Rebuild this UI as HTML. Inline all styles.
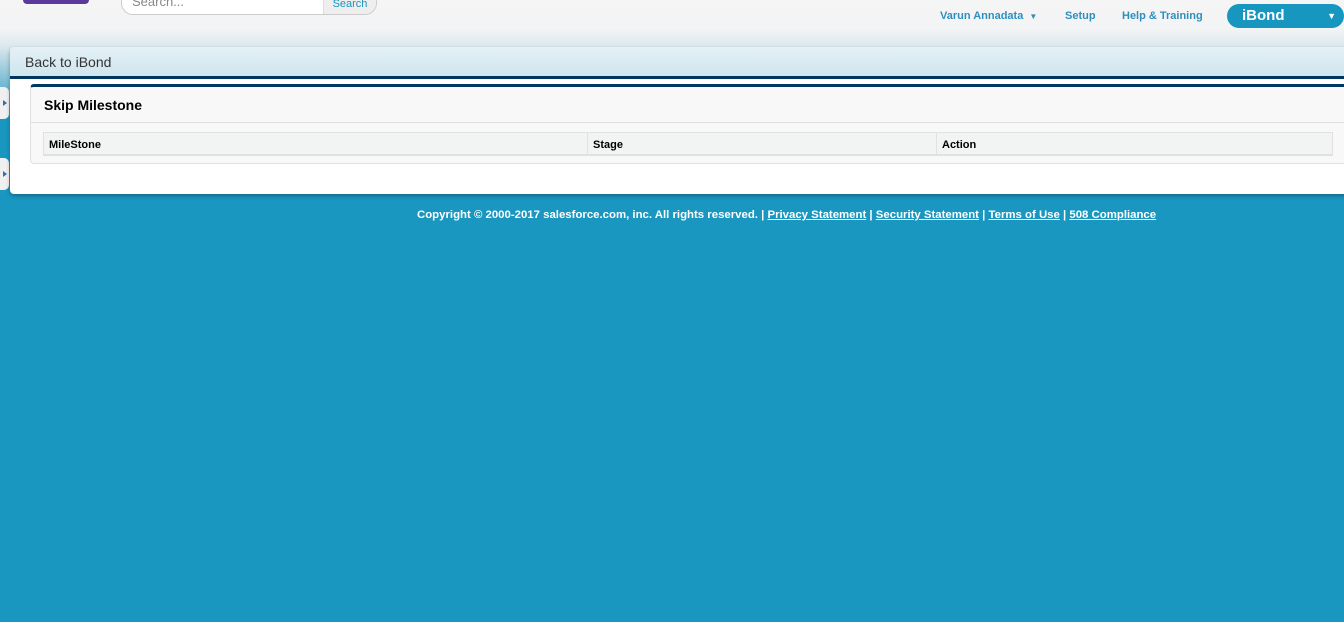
<!DOCTYPE html>
<html><head><style>
body{margin:0;width:1344px;height:622px;overflow:hidden;font-family:"Liberation Sans",Arial,sans-serif;background:linear-gradient(#f5f5f5 0,#f3f4f5 28px,#dce8ee 46px,#7fbfd6 80px,#1997c0 120px,#1997c0 100%);position:relative}
.a{position:absolute}
.logo{left:23px;top:0;width:66px;height:4px;background:#5a3a9a;border-radius:0 0 4px 4px}
.search{left:121px;top:-10px;width:254px;height:23px;border:1px solid #ccc;border-radius:12px;background:#fff;overflow:hidden}
.search span{position:absolute;left:10px;top:3px;font-size:13px;color:#888}
.search b{position:absolute;right:0;top:0;width:52px;height:23px;background:#eee;border-left:1px solid #ddd;font-weight:normal;font-size:11px;color:#1797c0;text-align:center;line-height:26px}
.nav{top:10px;font-size:11px;font-weight:bold;color:#2e8fbf}
.ib{left:1227px;top:4px;width:117px;height:24px;background:#1797c0;border-radius:12px;color:#fff;font-weight:bold;font-size:14px}
.panel{left:10px;top:47px;width:1340px;height:147px;background:#fff;border-radius:4px;box-shadow:0 2px 4px rgba(0,0,0,.3)}
.hd{left:0;top:0;width:100%;height:29px;background:linear-gradient(#e4f1f6,#cfe5ee);border-bottom:3px solid #003760;border-radius:4px 0 0 0;font-size:14px;color:#333}
.blk{left:20px;top:37px;width:1320px;height:76px;background:#f8f8f8;border:1px solid #e0e0e0;border-top:3px solid #003760;border-radius:4px 0 0 4px}
.tab{left:12px;top:45px;width:1288px;height:21px;background:#f2f3f3;border:1px solid #dfe1e2;border-bottom:2px solid #dfe1e2;font-size:11px;font-weight:bold;color:#000}
.tab div{position:absolute;top:0;height:21px;line-height:24px;padding-left:5px;border-left:1px solid #dfe1e2}
.tg{left:0;width:9px;height:32px;background:#f0f0f0;border-radius:0 5px 5px 0}
.tg:after{content:"";position:absolute;left:3px;top:13px;border-left:4px solid #3a6ea8;border-top:3px solid transparent;border-bottom:3px solid transparent}
.ft{left:417px;top:209px;white-space:nowrap;font-size:11.4px;color:#fff;font-weight:bold}
</style></head><body>
<div class="a logo"></div>
<div class="a search"><span>Search...</span><b>Search</b></div>
<div class="a nav" style="left:940px">Varun Annadata <span style="font-size:8px;margin-left:3px">&#9660;</span></div>
<div class="a nav" style="left:1065px">Setup</div>
<div class="a nav" style="left:1122px">Help &amp; Training</div>
<div class="a ib"><span class="a" style="left:15px;top:3px;font-size:15px">iBond</span><span class="a" style="right:8px;top:7px;font-size:9px">&#9660;</span></div>
<div class="a tg" style="top:87px"></div>
<div class="a tg" style="top:158px"></div>
<div class="a panel">
 <div class="a hd"><span class="a" style="left:15px;top:7px">Back to iBond</span></div>
 <div class="a blk">
  <div class="a" style="left:13px;top:10px;font-size:14px;font-weight:bold;color:#000">Skip Milestone</div>
  <div class="a" style="left:0;top:35px;width:100%;border-top:1px solid #e0e0e0"></div>
  <div class="a tab"><div style="left:0;border-left:0">MileStone</div><div style="left:543px">Stage</div><div style="left:892px">Action</div></div>
 </div>
</div>
<div class="a ft">Copyright © 2000-2017 salesforce.com, inc. All rights reserved. | <u>Privacy Statement</u> | <u>Security Statement</u> | <u>Terms of Use</u> | <u>508 Compliance</u></div>
</body></html>
